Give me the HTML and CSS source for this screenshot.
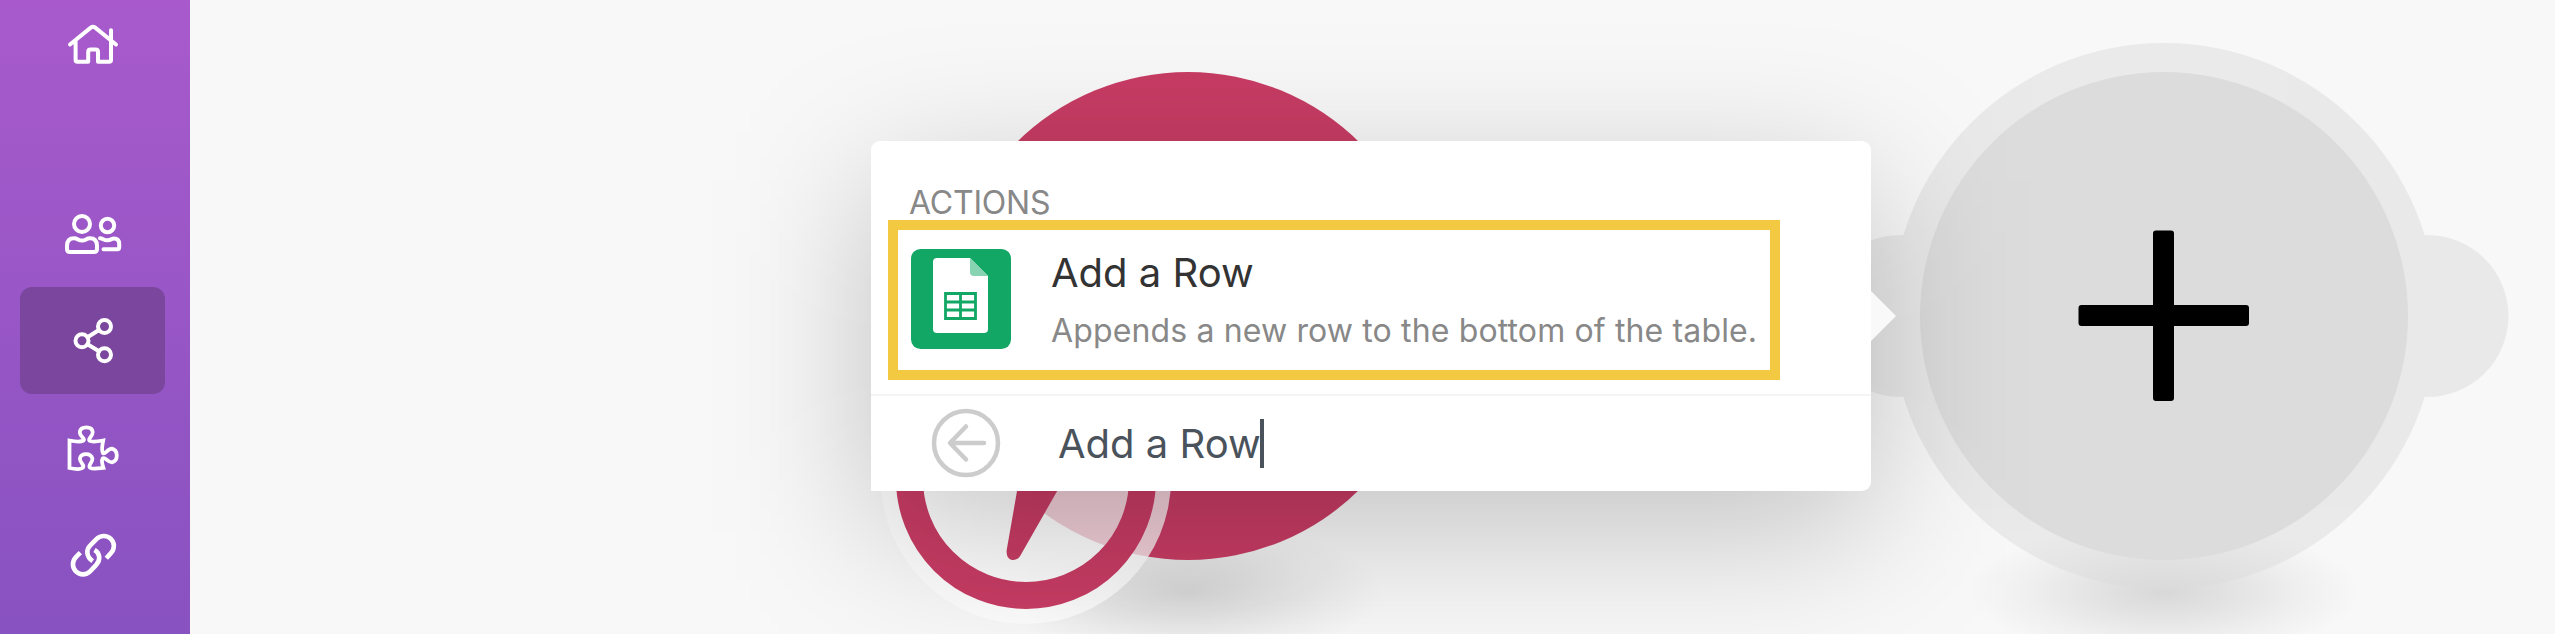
FILE: index.html
```html
<!DOCTYPE html>
<html lang="en">
<head>
<meta charset="utf-8">
<title>Scenario editor</title>
<link rel="stylesheet" href="styles.css">
</head>
<body>
<div class="app">
  <nav class="sidebar">
    <a class="nav-item nav-home"><svg class="icon" viewBox="0 0 60 60"><path d="M10 29.500L30.800 12.600Q33 10.800 35.200 12.600L56 29.500M15.600 27V45Q15.600 46.800 17.400 46.800H28.200V37Q28.200 34.600 30.600 34.600H35.600Q38 34.600 38 37V46.800H49.200Q51 46.800 51 45V15.200"/></svg></a>
    <a class="nav-item"><svg class="icon" viewBox="0 0 60 60"><circle cx="22" cy="20" r="8"/><circle cx="47.500" cy="21.500" r="6.700"/><path d="M7 45V42Q7 34.300 14 34.300C18 34.300 18 36.600 22 36.600S26 34.300 30 34.300Q37 34.300 37 42V45Q37 48 34 48H10Q7 48 7 45ZM40 34.300C43 34.300 43.500 36.300 47.500 36.300S51 34.500 54 34.500Q59.200 34.500 59.200 40V43.500Q59.200 45.200 57.500 45.200H43.500"/></svg></a>
    <a class="nav-item active"><svg class="icon" viewBox="0 0 60 60"><circle cx="44.500" cy="15.500" r="6.500"/><circle cx="22" cy="29.700" r="6.500"/><circle cx="44.500" cy="43.700" r="6.500"/><path d="M27.500 26.200L39 19M27.500 33.200L39 40.200"/></svg></a>
    <a class="nav-item"><svg class="icon puzzle" viewBox="0 0 60 60"><path d="M9.500 20.500C15 21.600 21 22 23.500 20.500C25.700 18.500 19.500 16.500 19.800 12C20.300 8 23 7.300 26.400 7.300S32.300 8.500 32.700 12C33 16.500 27.500 18.500 29.500 20.800C32 22.500 38.500 21.400 43.200 20.500C42.400 25 41 30 43 33.200C45.500 35 47 28.600 52 28.600Q56.800 29.800 56.800 35.500T52 42.300C47 42.300 45.500 36.500 42.700 38.400C41.200 41 42.200 44.500 43.400 47.900C38.500 48.400 32.500 49.500 30 47.700C27.500 45 33 42.500 32.400 38.500C31.500 35.500 29 34.200 26.100 34.200S20.500 35.700 19.900 38.500C19.500 43 25 44.500 23 47.500C21 49.600 14 49 9.500 48Z"/></svg></a>
    <a class="nav-item"><svg class="icon link" viewBox="0 0 60 60"><path d="M46.300 36.200L50.900 31.100A10 10 0 0 0 36.700 16.900L30.500 23.200C25.500 28 26.500 35 32.700 39.200M20.300 30.700L15.900 35.200A10 10 0 0 0 30.100 49.400L36 43.200C41 38.200 40 31 34.500 28"/></svg></a>
  </nav>
  <main class="stage">
    <svg class="canvas" viewBox="190 0 2365 634">
      <defs>
        <radialGradient id="ground">
          <stop offset="0" stop-color="#000" stop-opacity=".13"/>
          <stop offset=".35" stop-color="#000" stop-opacity=".085"/>
          <stop offset=".7" stop-color="#000" stop-opacity=".035"/>
          <stop offset="1" stop-color="#000" stop-opacity="0"/>
        </radialGradient>
        <filter id="soft" filterUnits="userSpaceOnUse" x="400" y="-300" width="2000" height="1300" color-interpolation-filters="sRGB"><feGaussianBlur stdDeviation="75"/></filter>
      </defs>
      <ellipse cx="2164" cy="592" rx="197" ry="68" fill="url(#ground)"/>
      <g class="ring"><circle cx="2164" cy="316" r="273"/><circle cx="1900" cy="316" r="81"/><circle cx="2427.500" cy="316" r="81"/></g>
      <circle class="empty-node" cx="2164" cy="316" r="244"/>
      <ellipse cx="1188" cy="592" rx="197" ry="68" fill="url(#ground)"/>
      <circle class="red" cx="1188" cy="316" r="244"/>
      <circle class="halo" cx="1026" cy="479" r="145"/>
      <circle class="clock" cx="1026" cy="479" r="116.500"/>
      <path class="red" d="M1026 440L1006.700 550C1005.500 562 1017 563 1021 554.500L1072 465Z"/>
      <rect x="871" y="181" width="1000" height="350" fill="#000" fill-opacity=".22" filter="url(#soft)"/>
      <path class="plus" d="M2081.500 305h71.500v-71.500q0-3 3-3h15q3 0 3 3v71.500h72q3 0 3 3v15q0 3-3 3h-72v72q0 3-3 3h-15q-3 0-3-3v-72h-71.500q-3 0-3-3v-15q0-3 3-3Z"/>
    </svg>
    <section class="popup">
      <h2 class="heading">ACTIONS</h2>
      <div class="action">
        <svg class="sheet" viewBox="0 0 100 100">
          <rect width="100" height="100" rx="9.500" fill="#12a765"/>
          <path d="M26 9H59L77 27V80Q77 84 73 84H26Q22 84 22 80V13Q22 9 26 9Z" fill="#fff"/>
          <path d="M59 9L77 27H63Q59 27 59 23Z" fill="#88d3b2"/>
          <path d="M34.500 44.500H64.500V69.500H34.500ZM49.500 44V70M34 53H65M34 61H65" fill="none" stroke="#12a765" stroke-width="2.800"/>
        </svg>
        <div class="copy"><div class="title">Add a Row</div><div class="description">Appends a new row to the bottom of the table.</div></div>
      </div>
      <div class="search">
        <svg class="back" viewBox="0 0 70 70"><circle cx="35" cy="35" r="32"/><path d="M53 35H19.500M35 18.500L19 35L35 51.500"/></svg>
        <span class="query">Add a Row</span><span class="caret"></span>
      </div>
      <svg class="pointer" viewBox="0 0 25 50"><path d="M0 0L25 25L0 50Z"/></svg>
    </section>
  </main>
</div>
</body>
</html>
```
FILE: styles.css
```css
* { box-sizing: border-box; }
body { margin: 0; overflow: hidden; font-family: Inter, "Liberation Sans", sans-serif; background: #f8f8f8; }
.app { display: flex; height: 634px; }
.sidebar { width: 190px; flex: none; display: flex; flex-direction: column; align-items: flex-start; padding-left: 20px; background: linear-gradient(#a85acc, #8852c0); }
.nav-item { width: 145px; height: 107px; flex: none; display: flex; justify-content: center; align-items: center; padding-right: 5px; border-radius: 12px; }
.nav-home { margin: -9px 0 82px; }
.active { background: #7a469e; }
.icon { width: 60px; height: 60px; fill: none; stroke: #fff; stroke-width: 4; stroke-linecap: round; stroke-linejoin: round; overflow: visible; }
.puzzle { margin-top: 4px; stroke-width: 3.8; stroke-linejoin: miter; }
.link { margin-top: -5px; stroke-width: 4.6; stroke-linecap: butt; }
.stage { position: relative; flex: 1; overflow: hidden; }
.canvas { display: block; width: 2365px; height: 634px; }
.ring { fill: #dcdcdc; opacity: .5; }
.empty-node { fill: #dcdcdc; }
.plus { fill: #000; }
.red { fill: #c83c64; }
.halo { fill: #fff; fill-opacity: .75; }
.clock { fill: none; stroke: #c83c64; stroke-width: 27; }
.popup { position: absolute; left: 681px; top: 141px; width: 1000px; height: 350px; padding-top: 42px; border-radius: 9px 9px 9px 0; background: #fff; }
.heading { margin: 0 0 0 38px; height: 37px; line-height: 39px; font-size: 32px; letter-spacing: -.2px; font-weight: 400; color: #888; }
.action { margin-left: 17px; width: 892px; height: 160px; border: 10px solid #f2c940; display: flex; padding: 19px 0 0 13px; }
.sheet { width: 100px; height: 100px; flex: none; }
.copy { padding-left: 40px; white-space: nowrap; }
.title { height: 48px; line-height: 48px; font-size: 40px; color: #333; }
.description { margin-top: 14px; height: 40px; line-height: 40px; font-size: 32px; letter-spacing: .14px; color: #888; }
.search { margin-top: 14px; height: 97px; border-top: 2px solid #f4f4f4; display: flex; align-items: center; padding-left: 60px; }
.back { width: 70px; height: 70px; margin-top: -2px; fill: none; stroke: #ccc; stroke-width: 4.5; stroke-linecap: round; stroke-linejoin: round; }
.query { margin-left: 57px; font-size: 40px; line-height: 48px; color: #4a525b; white-space: nowrap; }
.caret { width: 4px; height: 49px; margin-left: -1px; background: #4a525b; }
.pointer { position: absolute; left: 1000px; top: 150px; width: 25px; height: 50px; fill: #f9f9f9; }
```
